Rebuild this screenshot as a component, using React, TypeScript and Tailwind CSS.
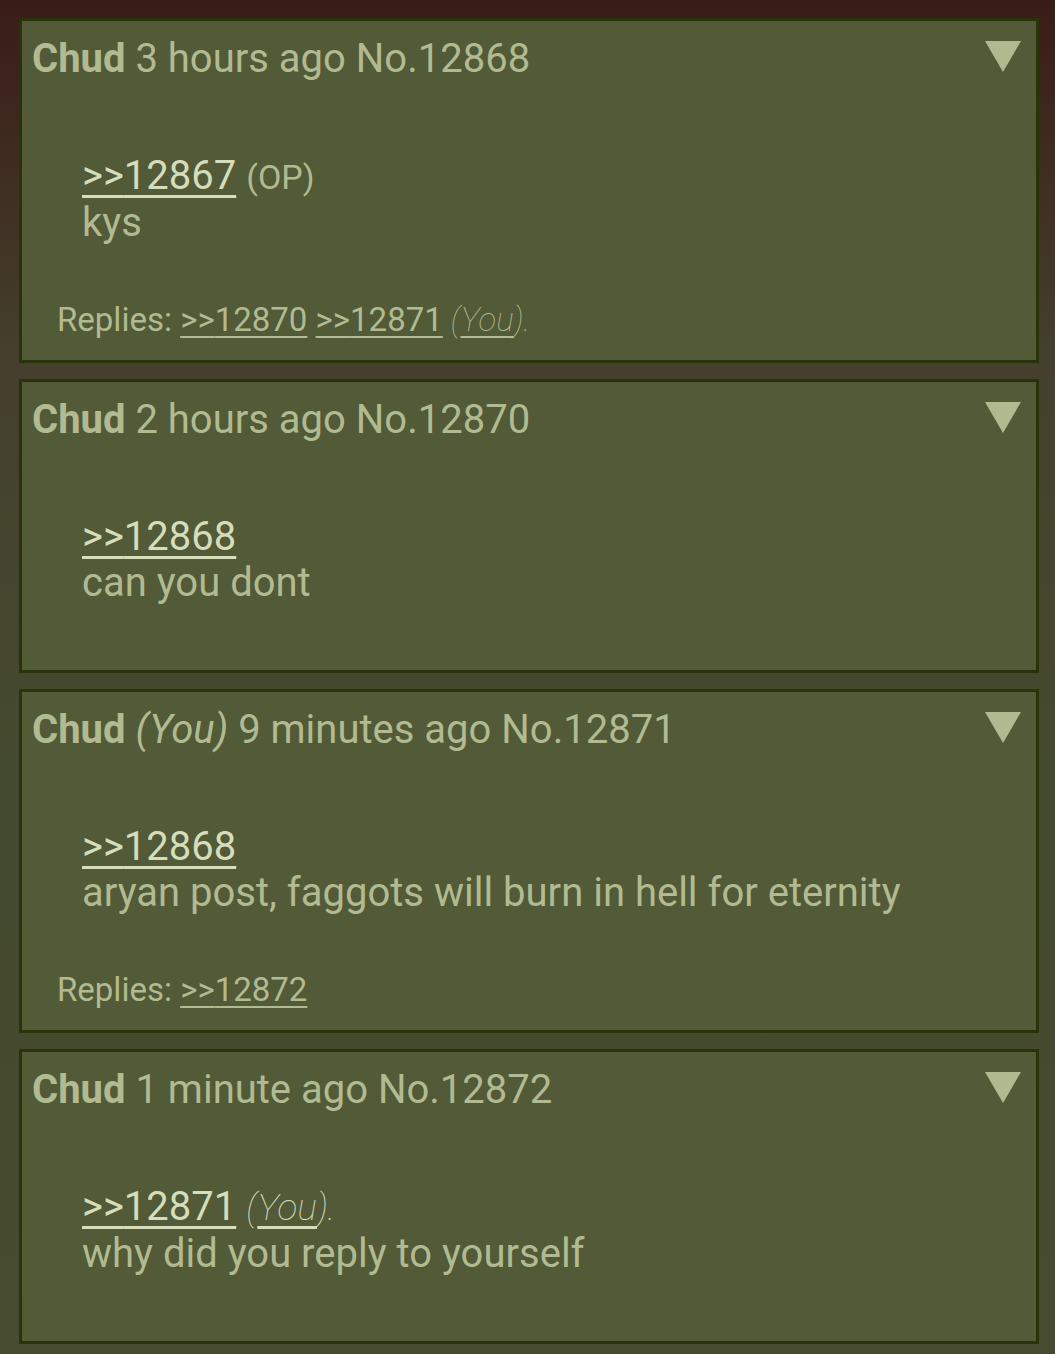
import React from 'react';

type Post = {
  no: number;
  ago: string;
  you?: boolean;
  quote: number;
  quoteTag?: 'OP' | 'You';
  text: string;
  replies?: { no: number; you?: boolean }[];
};

const posts: Post[] = [
  {
    no: 12868,
    ago: '3 hours ago',
    quote: 12867,
    quoteTag: 'OP',
    text: 'kys',
    replies: [{ no: 12870 }, { no: 12871, you: true }],
  },
  { no: 12870, ago: '2 hours ago', quote: 12868, text: 'can you dont' },
  {
    no: 12871,
    ago: '9 minutes ago',
    you: true,
    quote: 12868,
    text: 'aryan post, faggots will burn in hell for eternity',
    replies: [{ no: 12872 }],
  },
  { no: 12872, ago: '1 minute ago', quote: 12871, quoteTag: 'You', text: 'why did you reply to yourself' },
];

function Caret() {
  return (
    <svg width="36" height="31" viewBox="0 0 36 31" className="shrink-0 mt-[6px] mr-[5px]">
      <polygon points="0,0 36,0 18,31" fill="#b0b98f" />
    </svg>
  );
}

function PostBox({ post }: { post: Post }) {
  return (
    <div className="flex flex-col border-[3px] border-[#283309] bg-[#525a38] pt-[14px] pb-[20px] px-[10px] text-[#b1ba90]">
      {/* header row */}
      <div className="flex justify-between items-start">
        <div className="text-[40px] leading-[48px]">
          <span className="font-bold">Chud</span>{' '}
          {post.you && (
            <>
              <span className="italic">(You)</span>{' '}
            </>
          )}
          <span>{post.ago}</span> <span>No.{post.no}</span>
        </div>
        <Caret />
      </div>

      {/* body */}
      <div className="mt-[70px] mb-[44px] ml-[50px] text-[40px] leading-[46px]">
        <div>
          <a className="text-[#d6ddba] underline decoration-[3px] underline-offset-[6px]">&gt;&gt;{post.quote}</a>
          {post.quoteTag === 'OP' && <span className="text-[34px] ml-[10px]">(OP)</span>}
          {post.quoteTag === 'You' && (
            <span className="ml-[10px] text-[37px] italic font-thin text-[#d6ddba]">
              (<span className="underline decoration-[3px] underline-offset-[6px]">You</span>).
            </span>
          )}
        </div>
        <div>{post.text}</div>
      </div>

      {post.replies && (
        <div className="mt-[10px] ml-[25px] text-[33px] leading-[40px]">
          Replies:{' '}
          {post.replies.map((r, i) => (
            <React.Fragment key={r.no}>
              {i > 0 && ' '}
              <a className="underline decoration-2 underline-offset-[5px]">&gt;&gt;{r.no}</a>
              {r.you && (
                <span className="italic font-thin">
                  {' '}(<span className="underline decoration-2 underline-offset-[5px]">You</span>).
                </span>
              )}
            </React.Fragment>
          ))}
        </div>
      )}
    </div>
  );
}

export default function App() {
  return (
    <div
      className="min-h-[1354px] pt-[18px] pl-[19px] pr-[16px] pb-[14px] flex flex-col gap-[16px] bg-[linear-gradient(to_bottom,#3a1c17_0px,#45402d_360px,#444a2f_760px,#474b30_1354px)]"
      style={{ fontFamily: 'Roboto, "Liberation Sans", sans-serif' }}
    >
      {posts.map((p) => (
        <PostBox key={p.no} post={p} />
      ))}
    </div>
  );
}
